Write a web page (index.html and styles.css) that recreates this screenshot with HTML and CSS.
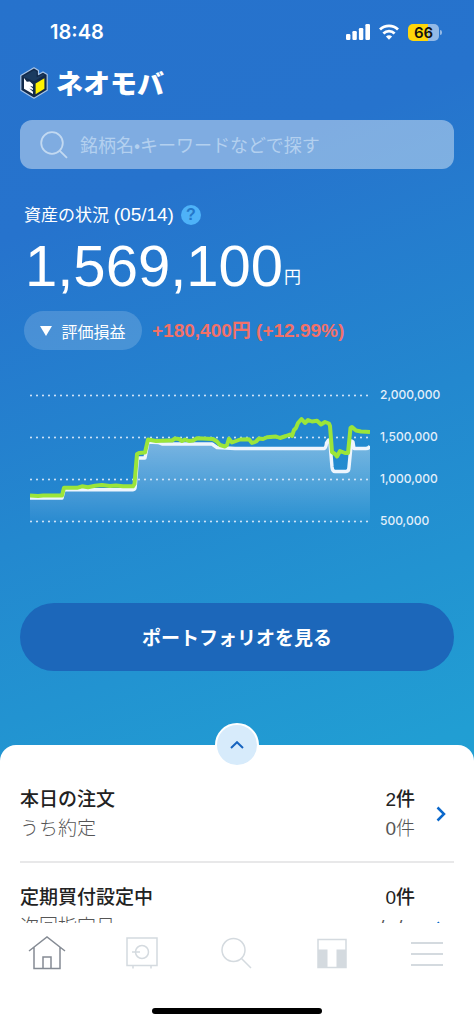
FILE: index.html
```html
<!DOCTYPE html>
<html lang="ja">
<head>
<meta charset="utf-8">
<meta name="viewport" content="width=device-width, initial-scale=1">
<title>ネオモバ</title>
<link rel="stylesheet" href="styles.css">
</head>
<body>
<div class="app">
  <main class="content">
    <div class="status-bar">
      <span class="time">18:48</span>
      <div class="status-icons">
        <svg width="24" height="16" viewBox="0 0 24 16" fill="#fff" aria-hidden="true">
          <rect x="0" y="10" width="4.4" height="6" rx="1.2"/><rect x="6.4" y="7" width="4.4" height="9" rx="1.2"/><rect x="12.9" y="4" width="4.4" height="12" rx="1.2"/><rect x="19.4" y="0" width="4.6" height="16" rx="1.2"/>
        </svg>
        <svg width="20" height="16" viewBox="0 0 20 16" fill="none" stroke="#fff" stroke-width="2.8" aria-hidden="true">
          <path d="M1 5.4a13 13 0 0 1 18 0"/><path d="M4.4 9.400a8.2 8.2 0 0 1 11.2 0"/><path d="M10 15.8 6.9 12.6a4.5 4.5 0 0 1 6.2 0z" fill="#fff" stroke="none"/>
        </svg>
        <span class="battery"><span class="battery-level">66</span></span>
      </div>
    </div>

    <header class="brand">
      <svg width="28" height="32" viewBox="0 0 28 32" aria-hidden="true">
        <path d="M14 .8 18.5 3.6v4l4.5-2.7 4.2 2.6v15.7L14 31.2.8 23.2V8.6z" fill="#132a4a" stroke="#a9c5e8" stroke-width="1.2" stroke-linejoin="round"/>
        <path d="M3 9.8 14 3.2l2.6 1.6v5.700l6.400-3.600 1.6 1-10.400 6.300z" fill="#1b3b60"/>
        <path d="m15.6 16.5 8.8-5.3v10.6l-8.8 5.5z" fill="#fff200"/>
        <path d="m4 11 2.800 3.800 3-.4 3.200 3v2.400l-3-1 3 2.800v1.400l-3.700-1.600 3.700 3.400v2.200L4 21.800z" fill="#fff"/>
      </svg>
      <span class="brand-name">ネオモバ</span>
    </header>

    <label class="search">
      <svg width="28" height="28" viewBox="0 0 28 28" fill="none" stroke="#c2d9f1" stroke-width="1.8" aria-hidden="true">
        <circle cx="12" cy="12" r="10.8"/><path d="m19.6 19.6 7.4 7.2"/>
      </svg>
      <input type="search" aria-label="検索" placeholder="銘柄名•キーワードなどで探す">
    </label>

    <section class="assets">
      <div class="assets-head">
        <h1>資産の状況 <span class="as-of">(05/14)</span></h1>
        <button class="help" aria-label="ヘルプ">?</button>
      </div>
      <p class="total">1,569,100<span class="yen">円</span></p>
      <div class="profit">
        <button class="chip"><svg width="12" height="10" viewBox="0 0 12 10" aria-hidden="true"><path d="M0 0h12L6 10z" fill="#fff"/></svg>評価損益</button>
        <strong class="gain">+180,400円 (+12.99%)</strong>
      </div>
    </section>

    <section class="chart" aria-label="資産の推移">
      <svg class="plot" viewBox="30 374 340 168" aria-hidden="true">
        <defs>
          <linearGradient id="area" gradientUnits="userSpaceOnUse" x1="0" y1="440" x2="0" y2="522">
            <stop offset="0" stop-color="#fff" stop-opacity=".4"/><stop offset="1" stop-color="#fff" stop-opacity=".03"/>
          </linearGradient>
        </defs>
        <path fill="url(#area)" d="M30 498H62L64 490H134L137 458H145L148 442 160 443.500H212L217 447.500 325 448.500 328 441 331 447 332 468 335 471.500H347L349 465 351 441 354 448.500H367L370 446V522H30z"/>
        <g stroke="#dceafa" stroke-width="2" stroke-linecap="round" stroke-dasharray="0 6"><path d="M31 395.500H370M31 437.500H370M31 479.500H370M31 521.500H370"/></g>
        <g fill="none" stroke-linejoin="round">
          <path stroke="#eef5fd" stroke-width="3.400" d="M30 498H62L64 489.800H133Q135 489.800 135.200 487L137.500 458H145L148 442 158 442.500 162 444H212L217 447.500 235 448.500H324Q326 448 326.500 443L328.500 440 330 443 332 467Q332.500 471.500 335 471.500H346Q349 471.500 349 467L351.500 441 353 442 354 448.500H366Q369 448.500 370 446"/>
          <path stroke="#9be53a" stroke-width="4" d="M30 495.500 38 496 43 495.500H62L64 487.800H77L82 486.300 88 487.300 95 485.800 102 485 110 486 116 485.500 123 486.300H133L134.500 484 137 454 139 453 145 452.500 148 439.500 156 441 168 440.500 172 440.500 175 438.500 179 439 182 441 185 439.500 189 441 193 440.500 197 438.200 213 439 217 441.500 220 445 225 446.500 227 445 229 438.700 232 442.500 236 441 240 439.500 249 439.300 252 443 256 441.500 259 438.500 263 439 267 437.200 276 436.500 280 438 286 436 290 434.500 292 436 294 430 296 428 298 423 301.500 419 305 423 308 420 312 421.500 317 420.700 321 424.500 325 422 329 423.500 330 426 332 452 335 454 337 456.500 340 451 345 453H348L350.500 428 352 427 356 430.500 361 431.500 370 432"/>
        </g>
      </svg>
      <div class="axis"><span>2,000,000</span><span>1,500,000</span><span>1,000,000</span><span>500,000</span></div>
    </section>

    <button class="portfolio">ポートフォリオを見る</button>

    <section class="sheet">
      <button class="expand" aria-label="開く">
        <svg width="14" height="8" viewBox="0 0 14 8" fill="none" stroke="#1764bf" stroke-width="2" aria-hidden="true"><path d="m1 7 6-5.800L13 7"/></svg>
      </button>
      <a class="row" href="#orders">
        <span class="cell"><b>本日の注文</b><span>うち約定</span></span>
        <span class="cell end"><b>2件</b><span>0件</span></span>
        <svg class="arrow" width="10" height="16" viewBox="0 0 10 16" aria-hidden="true"><path d="m1.500 1.500 6.500 6.500-6.500 6.500"/></svg>
      </a>
      <a class="row tall" href="#recurring">
        <span class="cell"><b>定期買付設定中</b><span>次回指定日</span></span>
        <span class="cell end"><b>0件</b><span>--/--/--</span></span>
        <svg class="arrow" width="10" height="16" viewBox="0 0 10 16" aria-hidden="true"><path d="m1.500 1.500 6.500 6.500-6.500 6.500"/></svg>
      </a>
    </section>
  </main>

  <nav class="tabs">
    <div class="tab-list">
      <a class="active" href="#home" aria-label="ホーム"><svg width="38" height="36" viewBox="0 0 38 36"><path d="m1 16 18-14 18 14M6 12.500V33.500H32V12.500M15 33V22h8v11"/></svg></a>
      <a href="#assets" aria-label="資産"><svg width="38" height="36" viewBox="0 0 38 36"><path d="M4 3h30v27.500H4zM10 30.500v3M28 30.500v3M9 17h8"/><circle cx="19" cy="17" r="6.500"/></svg></a>
      <a href="#search" aria-label="検索"><svg width="38" height="36" viewBox="0 0 38 36"><circle cx="15.500" cy="15" r="11.500"/><path d="m23.500 23.500 9.500 9.500"/></svg></a>
      <a href="#tpoint" aria-label="Tポイント"><svg width="38" height="36" viewBox="0 0 38 36"><path d="M5 4.500h28v28H5z"/><path class="solid" d="M5 14.500h9.500v18H5zM23.500 14.500H33v18h-9.500z"/></svg></a>
      <a href="#menu" aria-label="メニュー"><svg width="38" height="36" viewBox="0 0 38 36"><path class="bars" d="M3 8h32M3 19h32M3 30h32"/></svg></a>
    </div>
    <div class="home-indicator"></div>
  </nav>
</div>
</body>
</html>
```
FILE: styles.css
```css
* { box-sizing: border-box; }
body {
  margin: 0;
  font-family: "Liberation Sans", "Noto Sans CJK JP", sans-serif;
  color: #222;
}
h1, p { margin: 0; }
button { border: 0; padding: 0; font-family: inherit; color: inherit; cursor: pointer; }
a { color: inherit; text-decoration: none; }
svg { display: block; flex: none; }

.app { display: flex; flex-direction: column; height: 100vh; background: #fff; }
.content {
  flex: 1;
  min-height: 0;
  overflow: hidden;
  display: flex;
  flex-direction: column;
  background: linear-gradient(160deg, #2672cc 0%, #2673cd 22%, #2388cf 50%, #219ed3 82%, #20a3d3 100%);
  color: #fff;
}

.status-bar {
  display: flex;
  justify-content: space-between;
  align-items: center;
  height: 64px;
  flex: none;
  padding: 0 32px 0 50px;
}
.time { font: 600 20px/24px Inter, sans-serif; }
.status-icons { display: flex; align-items: center; gap: 9px; }
.battery {
  position: relative;
  width: 31px;
  height: 17px;
  margin-right: 3px;
  border-radius: 5px;
  background: linear-gradient(90deg, #ffd60a 66%, #93b9e6 66%);
}
.battery::after {
  content: "";
  position: absolute;
  left: 32px;
  top: 6px;
  width: 2px;
  height: 5px;
  border-radius: 0 2px 2px 0;
  background: #93b9e6;
}
.battery-level { display: block; text-align: center; font: 600 15px/17px Inter, sans-serif; color: #111; }

.brand { display: flex; align-items: center; gap: 8px; height: 38px; flex: none; padding: 0 20px; }
.brand-name { font: 900 27px/38px "Noto Sans CJK JP", sans-serif; }

.search {
  display: flex;
  align-items: center;
  gap: 12px;
  height: 49px;
  flex: none;
  margin: 18px 20px 0;
  padding: 0 20px;
  border-radius: 12px;
  background: rgba(255, 255, 255, .41);
}
.search input {
  flex: 1;
  min-width: 0;
  padding: 0 0 2px;
  border: 0;
  outline: 0;
  background: none;
  color: #fff;
  font: 400 18px/26px "Noto Sans CJK JP", sans-serif;
}
.search input::placeholder { color: #b3d0ef; opacity: 1; }

.assets { padding: 33px 24px 0; flex: none; }
.assets-head { display: flex; align-items: center; gap: 7px; height: 26px; }
h1 { font-size: 17px; font-weight: 400; line-height: 26px; }
.as-of { font-size: 19px; }
.help {
  width: 20px;
  height: 20px;
  border-radius: 50%;
  background: #4eb2f8;
  color: #2477c9;
  font: 700 16px/20px "Liberation Sans", sans-serif;
}
.total { padding-left: 1px; font-size: 58px; line-height: 76px; white-space: nowrap; }
.yen { margin-left: 1px; font-size: 17px; line-height: 20px; vertical-align: 3px; }
.profit { display: flex; align-items: center; gap: 10px; margin-top: 7px; }
.chip {
  display: flex;
  align-items: center;
  justify-content: center;
  gap: 9px;
  flex: none;
  width: 118px;
  height: 39px;
  border-radius: 20px;
  background: rgba(255, 255, 255, .17);
  font-size: 16px;
}
.gain { font-size: 19px; line-height: 28px; color: #f27169; white-space: nowrap; }

.chart { display: flex; flex: none; gap: 10px; margin: 24px 28px 0 30px; }
.plot { flex: 1; min-width: 0; height: auto; }
.axis {
  display: flex;
  flex-direction: column;
  justify-content: space-around;
  width: 66px;
  font: 500 12px/22px Inter, sans-serif;
  color: #e3effa;
}

.portfolio {
  flex: none;
  height: 68px;
  margin: 61px 20px 0;
  padding-bottom: 2px;
  border-radius: 34px;
  background: #1c67ba;
  font-size: 19px;
  font-weight: 700;
}

.sheet {
  position: relative;
  flex: 1 0 auto;
  margin-top: 74px;
  padding: 23px 20px 0;
  border-radius: 16px 16px 0 0;
  background: #fff;
  color: #222;
}
.expand {
  position: absolute;
  top: -22px;
  left: 50%;
  display: flex;
  align-items: center;
  justify-content: center;
  width: 44px;
  height: 44px;
  margin-left: -22px;
  border: 2px solid #fff;
  border-radius: 50%;
  background: #d7ebfb;
}
.row {
  display: flex;
  align-items: center;
  height: 95px;
  padding: 16px 8px 18px 0;
  border-bottom: 2px solid #e8e8e9;
}
.row.tall { height: 132px; padding-top: 20px; }
.row.tall .cell { align-self: flex-start; }
.cell { display: flex; flex-direction: column; flex: 1; font-size: 19px; line-height: 29px; }
.cell b { font-weight: 500; color: #222; }
.cell span { font-weight: 300; color: #555; }
.end { text-align: right; }
.arrow { margin-left: 21px; fill: none; stroke: #0b68cb; stroke-width: 2.5; }

.tabs { flex: none; background: #fff; padding: 12px 0 10px; }
.tab-list { display: flex; height: 36px; }
.tab-list a { flex: 1; display: flex; justify-content: center; }
.tab-list svg { fill: none; stroke: #d4dadf; stroke-width: 1.5; }
.tab-list .active svg { stroke: #858b94; }
.tab-list .solid { fill: #d4dadf; stroke: none; }
.tab-list .bars { stroke-width: 2; }
.home-indicator { width: 36%; height: 6px; margin: 37px auto 0; border-radius: 3px; background: #000; }
```
